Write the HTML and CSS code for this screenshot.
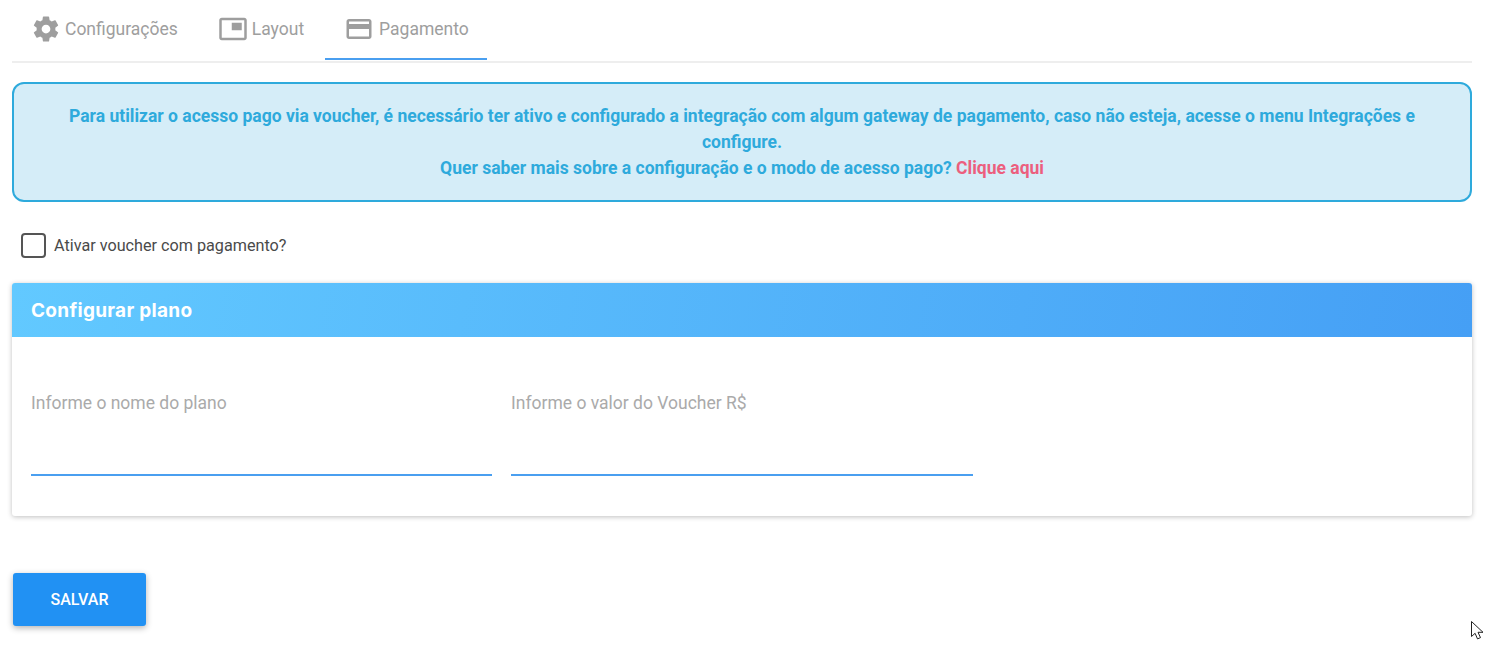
FILE: index.html
```html
<!DOCTYPE html>
<html lang="pt-BR">
<head>
    <meta charset="UTF-8">
    <meta name="viewport" content="width=device-width, initial-scale=1.0">
    <title>Pagamento</title>
    <link rel="stylesheet" href="styles.css">
</head>
<body>
    <div class="tabs">
        <div class="tab">
            <svg class="tab-icon" viewBox="0 0 24 24" width="30" height="30"><path d="M19.43 12.98c.04-.32.07-.64.07-.98s-.03-.66-.07-.98l2.11-1.65c.19-.15.24-.42.12-.64l-2-3.46c-.12-.22-.39-.3-.61-.22l-2.49 1c-.52-.4-1.08-.73-1.69-.98l-.38-2.65C14.46 2.18 14.25 2 14 2h-4c-.25 0-.46.18-.49.42l-.38 2.65c-.61.25-1.17.59-1.69.98l-2.49-1c-.23-.09-.49 0-.61.22l-2 3.46c-.13.22-.07.49.12.64l2.11 1.65c-.04.32-.07.65-.07.98s.03.66.07.98l-2.11 1.65c-.19.15-.24.42-.12.64l2 3.46c.12.22.39.3.61.22l2.49-1c.52.4 1.08.73 1.69.98l.38 2.65c.03.24.24.42.49.42h4c.25 0 .46-.18.49-.42l.38-2.65c.61-.25 1.17-.59 1.69-.98l2.49 1c.23.09.49 0 .61-.22l2-3.46c.12-.22.07-.49-.12-.64l-2.11-1.65zM12 15.5c-1.93 0-3.5-1.57-3.5-3.5s1.57-3.5 3.5-3.5 3.5 1.57 3.5 3.5-1.57 3.5-3.5 3.5z"/></svg>
            <span>Configurações</span>
        </div>
        <div class="tab">
            <svg class="tab-icon" viewBox="0 0 24 24" width="30" height="30"><path d="M19 7h-8v6h8V7zm2-4H3c-1.1 0-2 .9-2 2v14c0 1.1.9 1.98 2 1.98h18c1.1 0 2-.88 2-1.98V5c0-1.1-.9-2-2-2zm0 16.01H3V4.98h18v14.03z"/></svg>
            <span>Layout</span>
        </div>
        <div class="tab active">
            <svg class="tab-icon" viewBox="0 0 24 24" width="30" height="30"><path d="M20 4H4c-1.11 0-1.99.89-1.99 2L2 18c0 1.11.89 2 2 2h16c1.11 0 2-.89 2-2V6c0-1.11-.89-2-2-2zm0 14H4v-6h16v6zm0-10H4V6h16v2z"/></svg>
            <span>Pagamento</span>
        </div>
    </div>

    <div class="notice">
        <p>Para utilizar o acesso pago via voucher, é necessário ter ativo e configurado a integração com algum gateway de pagamento, caso não esteja, acesse o menu Integrações e configure.</p>
        <p>Quer saber mais sobre a configuração e o modo de acesso pago? <a href="#">Clique aqui</a></p>
    </div>

    <label class="check">
        <span class="check-box"></span>
        <span>Ativar voucher com pagamento?</span>
    </label>

    <div class="card">
        <div class="card-header">Configurar plano</div>
        <div class="card-body">
            <div class="field">
                <div class="field-label">Informe o nome do plano</div>
            </div>
            <div class="field">
                <div class="field-label">Informe o valor do Voucher R$</div>
            </div>
        </div>
    </div>

    <button class="save">SALVAR</button>

    <svg class="cursor" width="13" height="19" viewBox="0 0 13 19"><path d="M.5.5v15l3.6-3.2 2.4 5.6 3-1.3-2.5-5.3h5z" fill="#fff" stroke="#222" stroke-width="1"/></svg>
</body>
</html>
```

FILE: styles.css
```css
body {
    font-family: Roboto, Arial, sans-serif;
    background-color: #fff;
    margin: 0;
    padding: 0 16px 0 12px;
    height: 656px;
    box-sizing: border-box;
    overflow: hidden;
    position: relative;
}
.tabs {
    display: flex;
    height: 63px;
    border-bottom: 2px solid #eee;
    box-sizing: border-box;
    align-items: flex-start;
}
.tab {
    height: 60px;
    display: flex;
    align-items: center;
    box-sizing: border-box;
    padding: 0 21px 0 19px;
    color: #9e9e9e;
    font-size: 17.5px;
    gap: 4px;
    border-bottom: 2px solid transparent;
}
.tab-icon {
    fill: #9e9e9e;
    flex: none;
}
.tab.active {
    border-bottom-color: #4a9ff0;
    gap: 5px;
    padding-right: 18px;
}
.notice {
    margin-top: 19px;
    height: 120px;
    box-sizing: border-box;
    border: 2px solid #2eaadc;
    border-radius: 12px;
    background-color: #d5edf8;
    color: #2eaadc;
    font-size: 17.5px;
    font-weight: 700;
    line-height: 26px;
    text-align: center;
    padding: 19px 40px 0;
}
.notice p {
    margin: 0;
}
.notice a {
    color: #ec5f7e;
    text-decoration: none;
}
.check {
    display: flex;
    align-items: center;
    gap: 8px;
    margin: 31px 0 0 9px;
    font-size: 16.2px;
    color: #4a4a4a;
    height: 25px;
}
.check-box {
    width: 25px;
    height: 25px;
    box-sizing: border-box;
    border: 2px solid #555;
    border-radius: 4px;
}
.card {
    margin-top: 25px;
    height: 233px;
    border-radius: 3px;
    background-color: #fff;
    box-shadow: 0 1px 5px rgba(0, 0, 0, 0.25);
}
.card-header {
    height: 54px;
    line-height: 55px;
    padding-left: 19px;
    border-radius: 3px 3px 0 0;
    background: linear-gradient(100deg, #62c9ff, #459ff5);
    color: #fff;
    font-family: Inter, sans-serif;
    font-size: 19px;
    font-weight: 700;
    letter-spacing: 0.3px;
}
.card-body {
    display: flex;
    gap: 19px;
    padding: 53px 0 0 19px;
}
.field {
    width: 461px;
    height: 86px;
    box-sizing: border-box;
    border-bottom: 2px solid #4a9ff0;
}
.field + .field {
    width: 462px;
}
.field-label {
    font-size: 17.5px;
    line-height: 26px;
    color: #aaa;
}
.save {
    display: block;
    margin: 57px 0 0 1px;
    width: 133px;
    height: 53px;
    border: none;
    border-radius: 3px;
    background-color: #2191f3;
    color: #fff;
    font-family: Roboto, Arial, sans-serif;
    font-size: 16px;
    font-weight: 500;
    box-shadow: 0 2px 6px rgba(0, 0, 0, 0.3);
}
.cursor {
    position: absolute;
    left: 1471px;
    top: 621px;
}
```
